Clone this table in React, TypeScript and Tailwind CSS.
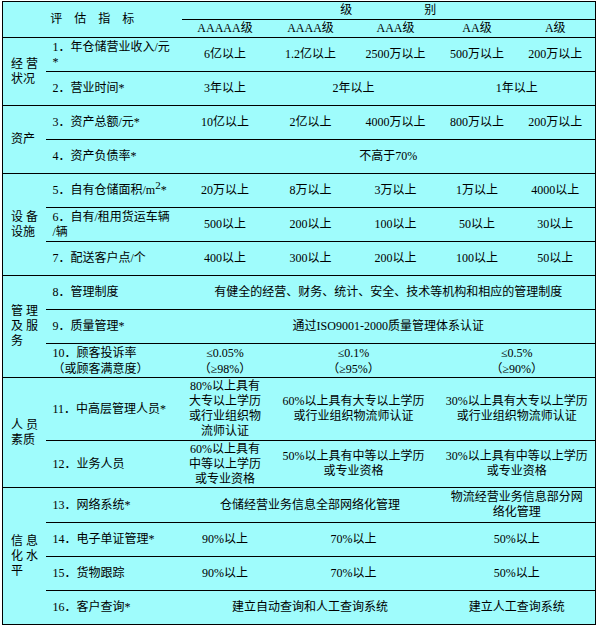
import React from "react";

type Cell = { t: React.ReactNode; span?: number };
type Row = { ind: React.ReactNode; cells: Cell[]; h: number; lead?: string };
type Group = { cat: React.ReactNode; rows: Row[] };

const groups: Group[] = [
  {
    cat: (
      <>
        经 营<br />状况
      </>
    ),
    rows: [
      {
        ind: (
          <>
            1．年仓储营业收入/元<br />*
          </>
        ),
        h: 34,
        cells: [{ t: "6亿以上" }, { t: "1.2亿以上" }, { t: "2500万以上" }, { t: "500万以上" }, { t: "200万以上" }],
      },
      {
        ind: "2．营业时间*",
        h: 34,
        cells: [{ t: "3年以上" }, { t: "2年以上", span: 2 }, { t: "1年以上", span: 2 }],
      },
    ],
  },
  {
    cat: "资产",
    rows: [
      {
        ind: "3．资产总额/元*",
        h: 34,
        cells: [{ t: "10亿以上" }, { t: "2亿以上" }, { t: "4000万以上" }, { t: "800万以上" }, { t: "200万以上" }],
      },
      { ind: "4．资产负债率*", h: 34, cells: [{ t: "不高于70%", span: 5 }] },
    ],
  },
  {
    cat: (
      <>
        设 备<br />设施
      </>
    ),
    rows: [
      {
        ind: (
          <>
            5．自有仓储面积/m<span className="relative -top-[5px] text-[11px]">2</span>*
          </>
        ),
        h: 34,
        cells: [{ t: "20万以上" }, { t: "8万以上" }, { t: "3万以上" }, { t: "1万以上" }, { t: "4000以上" }],
      },
      {
        ind: (
          <>
            6．自有/租用货运车辆<br />/辆
          </>
        ),
        h: 34,
        cells: [{ t: "500以上" }, { t: "200以上" }, { t: "100以上" }, { t: "50以上" }, { t: "30以上" }],
      },
      {
        ind: "7．配送客户点/个",
        h: 34,
        cells: [{ t: "400以上" }, { t: "300以上" }, { t: "200以上" }, { t: "100以上" }, { t: "50以上" }],
      },
    ],
  },
  {
    cat: (
      <>
        管 理<br />及 服<br />务
      </>
    ),
    rows: [
      {
        ind: "8．管理制度",
        h: 34,
        cells: [{ t: "有健全的经营、财务、统计、安全、技术等机构和相应的管理制度", span: 5 }],
      },
      { ind: "9．质量管理*", h: 34, cells: [{ t: "通过ISO9001-2000质量管理体系认证", span: 5 }] },
      {
        ind: (
          <>
            10．顾客投诉率<br />（或顾客满意度）
          </>
        ),
        h: 34,
        lead: "leading-[16px]",
        cells: [
          {
            t: (
              <>
                ≤0.05%<br />（≥98%）
              </>
            ),
          },
          {
            t: (
              <>
                ≤0.1%<br />（≥95%）
              </>
            ),
            span: 2,
          },
          {
            t: (
              <>
                ≤0.5%<br />（≥90%）
              </>
            ),
            span: 2,
          },
        ],
      },
    ],
  },
  {
    cat: (
      <>
        人 员<br />素质
      </>
    ),
    rows: [
      {
        ind: "11．中高层管理人员*",
        h: 63,
        cells: [
          {
            t: (
              <>
                80%以上具有<br />大专以上学历<br />或行业组织物<br />流师认证
              </>
            ),
          },
          {
            t: (
              <>
                60%以上具有大专以上学历<br />或行业组织物流师认证
              </>
            ),
            span: 2,
          },
          {
            t: (
              <>
                30%以上具有大专以上学历<br />或行业组织物流师认证
              </>
            ),
            span: 2,
          },
        ],
      },
      {
        ind: "12．业务人员",
        h: 47,
        cells: [
          {
            t: (
              <>
                60%以上具有<br />中等以上学历<br />或专业资格
              </>
            ),
          },
          {
            t: (
              <>
                50%以上具有中等以上学历<br />或专业资格
              </>
            ),
            span: 2,
          },
          {
            t: (
              <>
                30%以上具有中等以上学历<br />或专业资格
              </>
            ),
            span: 2,
          },
        ],
      },
    ],
  },
  {
    cat: (
      <>
        信 息<br />化 水<br />平
      </>
    ),
    rows: [
      {
        ind: "13．网络系统*",
        h: 35,
        cells: [
          { t: "仓储经营业务信息全部网络化管理", span: 3 },
          {
            t: (
              <>
                物流经营业务信息部分网<br />络化管理
              </>
            ),
            span: 2,
          },
        ],
      },
      {
        ind: "14．电子单证管理*",
        h: 34,
        cells: [{ t: "90%以上" }, { t: "70%以上", span: 2 }, { t: "50%以上", span: 2 }],
      },
      {
        ind: "15．货物跟踪",
        h: 34,
        cells: [{ t: "90%以上" }, { t: "70%以上", span: 2 }, { t: "50%以上", span: 2 }],
      },
      {
        ind: "16．客户查询*",
        h: 34,
        cells: [
          { t: "建立自动查询和人工查询系统", span: 3 },
          { t: "建立人工查询系统", span: 2 },
        ],
      },
    ],
  },
];

const grades = ["AAAAA级", "AAAA级", "AAA级", "AA级", "A级"];

export default function App() {
  return (
    <div className="w-[599px] h-[626px] bg-white pt-[1px] pl-[2px] font-['Liberation_Serif','Noto_Sans_CJK_SC',serif] text-[12px] leading-[15px] text-black">
      <table className="w-[594px] table-fixed border-collapse border border-black bg-[#9ffcfc]">
        <colgroup>
          <col className="w-[43px]" />
          <col className="w-[136px]" />
          <col className="w-[87px]" />
          <col className="w-[84px]" />
          <col className="w-[86px]" />
          <col className="w-[77px]" />
          <col className="w-[80px]" />
        </colgroup>
        <tbody>
          <tr className="h-[18px]">
            <td colSpan={2} rowSpan={2} className="p-0 text-center align-middle">
              评　估　指　标
            </td>
            <td colSpan={5} className="p-0 border-b border-black text-center align-middle">
              级　　　　　　别
            </td>
          </tr>
          <tr className="h-[18px]">
            {grades.map((g) => (
              <td key={g} className="p-0 text-center align-middle">
                {g}
              </td>
            ))}
          </tr>
          {groups.map((grp, gi) =>
            grp.rows.map((row, ri) => (
              <tr key={`${gi}-${ri}`} style={{ height: row.h }}>
                {ri === 0 && (
                  <td rowSpan={grp.rows.length} className="p-0 pl-[8px] border-t border-black align-middle leading-[15px]">
                    {grp.cat}
                  </td>
                )}
                <td className={`p-0 pl-[7px] border-t border-black align-middle whitespace-nowrap ${row.lead ?? ""}`}>
                  {row.ind}
                </td>
                {row.cells.map((c, ci) => (
                  <td
                    key={ci}
                    colSpan={c.span ?? 1}
                    className={`p-0 border-t border-black text-center align-middle whitespace-nowrap ${row.lead ?? ""}`}
                  >
                    {c.t}
                  </td>
                ))}
              </tr>
            ))
          )}
        </tbody>
      </table>
    </div>
  );
}
